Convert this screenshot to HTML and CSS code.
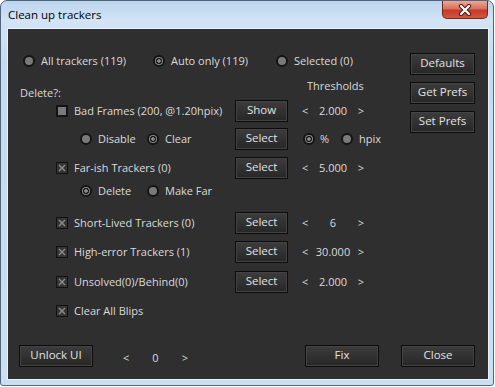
FILE: index.html
```html
<!DOCTYPE html>
<html lang="en">
<head>
    <meta charset="UTF-8">
    <title>Clean up trackers</title>
    <link rel="stylesheet" href="styles.css">
</head>
<body>
<div class="window">
    <div class="titleBar">
        <span class="titleText">Clean up trackers</span>
        <div class="closeButton">
            <svg width="14" height="12" viewBox="0 0 14 12">
                <path d="M3 2 L11 10 M11 2 L3 10" stroke="#4a1a14" stroke-width="4.2" stroke-linecap="round"/>
                <path d="M3 2 L11 10 M11 2 L3 10" stroke="#ffffff" stroke-width="2.2" stroke-linecap="round"/>
            </svg>
        </div>
    </div>
    <div class="panel">
        <div class="topArea">
            <div class="mainArea">
                <div class="scopeRow">
                    <div class="radioItem scopeAll"><span class="radio"></span>All trackers (119)</div>
                    <div class="radioItem scopeAuto"><span class="radio on"></span>Auto only (119)</div>
                    <div class="radioItem"><span class="radio"></span>Selected (0)</div>
                </div>
                <div class="headRow">
                    <span class="deleteCaption">Delete?:</span>
                    <span class="thresholdsCaption">Thresholds</span>
                </div>

                <div class="row">
                    <div class="checkItem"><span class="check"></span>Bad Frames (200, @1.20hpix)</div>
                    <div class="button rowButton">Show</div>
                    <div class="spinner"><span>&lt;</span><span>2.000</span><span>&gt;</span></div>
                </div>
                <div class="row gap6">
                    <div class="subOptions">
                        <div class="radioItem subItem"><span class="radio"></span>Disable</div>
                        <div class="radioItem"><span class="radio on"></span>Clear</div>
                    </div>
                    <div class="button rowButton">Select</div>
                    <div class="unitOptions">
                        <div class="radioItem unitItem"><span class="radio on"></span>%</div>
                        <div class="radioItem"><span class="radio"></span>hpix</div>
                    </div>
                </div>

                <div class="row gap7">
                    <div class="checkItem"><span class="check on"><svg width="10" height="10" viewBox="0 0 10 10"><path d="M2 2 L8 8 M8 2 L2 8" stroke="#8e8e8e" stroke-width="1.4"/></svg></span>Far-ish Trackers (0)</div>
                    <div class="button rowButton">Select</div>
                    <div class="spinner"><span>&lt;</span><span>5.000</span><span>&gt;</span></div>
                </div>
                <div class="row gap1">
                    <div class="subOptions">
                        <div class="radioItem subItem"><span class="radio on"></span>Delete</div>
                        <div class="radioItem"><span class="radio"></span>Make Far</div>
                    </div>
                </div>

                <div class="row gap10">
                    <div class="checkItem"><span class="check on"><svg width="10" height="10" viewBox="0 0 10 10"><path d="M2 2 L8 8 M8 2 L2 8" stroke="#8e8e8e" stroke-width="1.4"/></svg></span>Short-Lived Trackers (0)</div>
                    <div class="button rowButton">Select</div>
                    <div class="spinner"><span>&lt;</span><span>6</span><span>&gt;</span></div>
                </div>
                <div class="row gap7">
                    <div class="checkItem"><span class="check on"><svg width="10" height="10" viewBox="0 0 10 10"><path d="M2 2 L8 8 M8 2 L2 8" stroke="#8e8e8e" stroke-width="1.4"/></svg></span>High-error Trackers (1)</div>
                    <div class="button rowButton">Select</div>
                    <div class="spinner"><span>&lt;</span><span>30.000</span><span>&gt;</span></div>
                </div>
                <div class="row gap8">
                    <div class="checkItem"><span class="check on"><svg width="10" height="10" viewBox="0 0 10 10"><path d="M2 2 L8 8 M8 2 L2 8" stroke="#8e8e8e" stroke-width="1.4"/></svg></span>Unsolved(0)/Behind(0)</div>
                    <div class="button rowButton">Select</div>
                    <div class="spinner"><span>&lt;</span><span>2.000</span><span>&gt;</span></div>
                </div>
                <div class="row gap7">
                    <div class="checkItem"><span class="check on"><svg width="10" height="10" viewBox="0 0 10 10"><path d="M2 2 L8 8 M8 2 L2 8" stroke="#8e8e8e" stroke-width="1.4"/></svg></span>Clear All Blips</div>
                </div>
            </div>
            <div class="sideArea">
                <div class="button sideButton">Defaults</div>
                <div class="button sideButton">Get Prefs</div>
                <div class="button sideButton">Set Prefs</div>
            </div>
        </div>
        <div class="bottomRow">
            <div class="button bottomButton">Unlock UI</div>
            <div class="spinner bottomSpinner"><span>&lt;</span><span>0</span><span>&gt;</span></div>
            <div class="button bottomButton fixButton">Fix</div>
            <div class="button bottomButton closeDialogButton">Close</div>
        </div>
    </div>
</div>
</body>
</html>
```

FILE: styles.css
```css
body{
    margin: 0;
    background: #ffffff;
    font-family: "Open Sans", "Noto Sans", sans-serif;
}
.window{
    width: 494px;
    height: 386px;
    box-sizing: border-box;
    border: 1px solid #53657a;
    border-radius: 7px 7px 3px 3px;
    background: linear-gradient(to bottom, #bcd5ef 0px, #d2e4f6 20px, #c6dbf1 60px, #cbdff3 100%);
    padding: 0 5px 6px 7px;
    display: flex;
    flex-direction: column;
}
.titleBar{
    height: 28px;
    display: flex;
    align-items: flex-start;
}
.titleText{
    padding-top: 6px;
    font-size: 11.5px;
    line-height: 16px;
    color: #000000;
}
.closeButton{
    margin-left: auto;
    width: 46px;
    height: 18px;
    box-sizing: border-box;
    border: 1px solid #6e2a22;
    border-top: none;
    border-radius: 0 0 5px 5px;
    background: linear-gradient(to bottom, #eaa898 0px, #d86e58 8px, #c43a2a 9px, #d4573c 100%);
    display: flex;
    align-items: center;
    justify-content: center;
}
.panel{
    width: 480px;
    height: 350px;
    box-sizing: border-box;
    background: #2f2f2f;
    box-shadow: 0 0 0 1px #e9f1fa;
    padding: 22px 13px 12px 0;
    display: flex;
    flex-direction: column;
    color: #dadada;
    font-size: 11px;
    line-height: 14px;
}
.topArea{
    display: flex;
}
.mainArea{
    flex: 1;
    display: flex;
    flex-direction: column;
}
.sideArea{
    width: 65px;
    margin-top: 2px;
    display: flex;
    flex-direction: column;
    gap: 7px;
}
.button{
    height: 22px;
    box-sizing: border-box;
    border: 1px solid #0c0c0c;
    background: linear-gradient(to bottom, #3c3c3c, #272727);
    box-shadow: inset 0 0 0 1px #434343;
    color: #e2e2e2;
    font-size: 11.5px;
    display: flex;
    align-items: center;
    justify-content: center;
    padding-bottom: 2px;
}
.sideButton{
    width: 65px;
}
.rowButton{
    width: 53px;
}
.bottomButton{
    width: 74px;
}
.scopeRow{
    height: 20px;
    display: flex;
    align-items: center;
    padding-left: 15px;
}
.radioItem{
    display: flex;
    align-items: center;
    gap: 6px;
}
.scopeAll{
    width: 130px;
}
.scopeAuto{
    width: 123px;
}
.radio{
    width: 12px;
    height: 12px;
    box-sizing: border-box;
    border-radius: 50%;
    border: 2px solid #141414;
    background: #7a7a7a;
}
.radio.on{
    background: radial-gradient(circle, #8c8c8c 0 1.5px, #161616 2px 2.8px, #8c8c8c 3.3px);
}
.check{
    width: 12px;
    height: 12px;
    box-sizing: border-box;
    border: 2px solid #141414;
    background: #7a7a7a;
    display: flex;
    align-items: center;
    justify-content: center;
}
.check.on{
    border: 1px solid #111111;
    background: #343434;
}
.headRow{
    height: 29px;
    display: flex;
    align-items: flex-end;
}
.deleteCaption{
    padding-left: 12px;
    width: 287px;
}
.thresholdsCaption{
    margin-bottom: 7px;
}
.row{
    height: 22px;
    display: flex;
    align-items: center;
}
.gap1{ margin-top: 1px; }
.gap6{ margin-top: 6px; }
.gap7{ margin-top: 7px; }
.gap8{ margin-top: 8px; }
.gap10{ margin-top: 10px; }
.checkItem{
    width: 179px;
    padding-left: 48px;
    display: flex;
    align-items: center;
    gap: 6px;
}
.subOptions{
    width: 155px;
    padding-left: 72px;
    display: flex;
}
.subItem{
    width: 67px;
}
.spinner{
    margin-left: 14px;
    width: 62px;
    display: flex;
    justify-content: space-between;
}
.unitOptions{
    margin-left: 15px;
    display: flex;
}
.unitItem{
    width: 38px;
    gap: 5px;
}
.bottomRow{
    margin-top: auto;
    padding-left: 11px;
    display: flex;
    align-items: center;
}
.bottomSpinner{
    margin-left: 30px;
    width: 65px;
    padding-top: 3px;
}
.fixButton{
    margin-left: auto;
}
.closeDialogButton{
    margin-left: 22px;
}
```
